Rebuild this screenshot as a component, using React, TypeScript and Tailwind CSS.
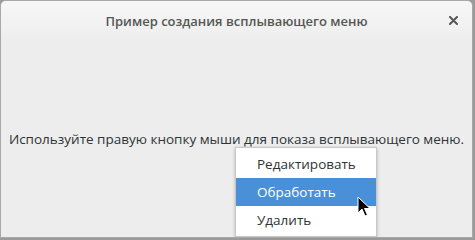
export default function App() {
  return (
    <div className="h-[240px] w-[475px] bg-[#9a9a9a] pr-[2px] pb-[2px]" style={{ fontFamily: '"Open Sans", "DejaVu Sans", sans-serif' }}>
      <div className="relative flex h-full w-full flex-col overflow-hidden rounded-t-[6px] border border-[#a8a8a8] bg-[#ededed]">
        <div className="relative flex h-[42px] shrink-0 items-center justify-center bg-gradient-to-b from-[#f7f7f7] to-[#ededed]">
          <span className="text-[13px] font-semibold text-[#555753]">Пример создания всплывающего меню</span>
          <svg className="absolute right-[14px] top-[15px]" width="9" height="9" viewBox="0 0 9 9">
            <path d="M1 1L8 8M8 1L1 8" stroke="#555753" strokeWidth="2" strokeLinecap="round" />
          </svg>
        </div>
        <div className="flex flex-1 flex-col items-center pt-[86px]">
          <p className="text-[13.5px] text-[#2e3436]">Используйте правую кнопку мыши для показа всплывающего меню.</p>
        </div>
        <div className="absolute left-[234px] top-[146px] w-[142px] border border-[#c8c8c8] bg-white py-[2px] text-[13.5px] text-[#2e3436] shadow-[0_1px_3px_rgba(0,0,0,0.25)]">
          <div className="h-[28px] pl-[21px] leading-[28px]">Редактировать</div>
          <div className="h-[28px] bg-[#4a90d9] pl-[21px] leading-[28px] text-white">Обработать</div>
          <div className="h-[28px] pl-[21px] leading-[28px]">Удалить</div>
        </div>
        <svg className="absolute left-[356px] top-[195px]" width="14" height="22" viewBox="0 0 14 22">
          <path d="M1 1L1 17L5 13L8 20L10.5 19L7.5 12.5L13 12.5Z" fill="#000" stroke="#fff" strokeWidth="1" strokeLinejoin="round" />
        </svg>
      </div>
    </div>
  );
}
